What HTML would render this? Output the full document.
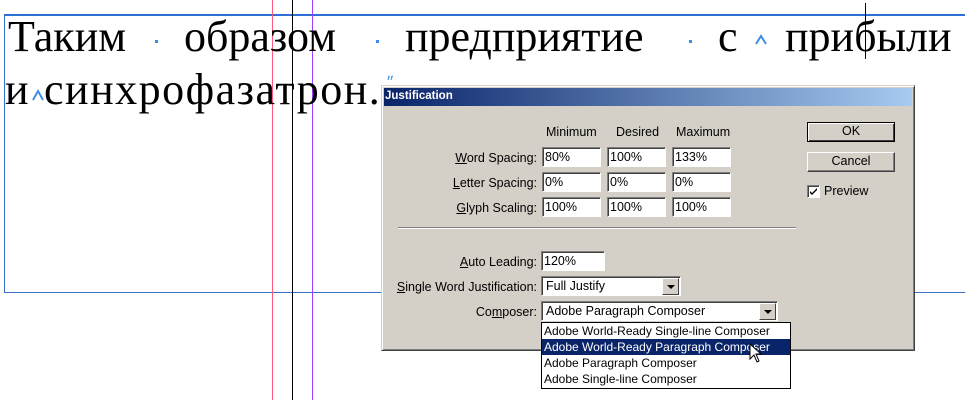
<!DOCTYPE html>
<html><head><meta charset="utf-8"><style>
*{margin:0;padding:0;box-sizing:border-box}
body{width:965px;height:400px;background:#fff;position:relative;overflow:hidden;font-family:"Liberation Sans",sans-serif;font-size:12.5px;color:#000}
.a{position:absolute}
.serif{font-family:"Liberation Serif","DejaVu Serif",serif;font-size:44px;white-space:nowrap;line-height:1}
.dot{position:absolute;width:3px;height:3px;background:#3a8ee6}
.lbl{position:absolute;text-align:right;white-space:nowrap}
.in{position:absolute;background:#fff;border-top:1px solid #808080;border-left:1px solid #808080;border-right:1px solid #fff;border-bottom:1px solid #fff;box-shadow:inset 1px 1px 0 #404040;padding:2px 0 0 2px;height:20px;white-space:nowrap}
.btn{position:absolute;width:88px;height:20px;background:#d4d0c8;border:1px solid;border-color:#fff #404040 #404040 #fff;box-shadow:inset -1px -1px 0 #808080;text-align:center;line-height:17px}
.arr{position:absolute;right:1px;top:1px;width:17px;height:17px;background:#d4d0c8;border:1px solid;border-color:#fff #404040 #404040 #fff}
.arr:after{content:"";position:absolute;left:4px;top:6px;border:4px solid transparent;border-top:4px solid #000}
u{text-decoration:underline}
</style></head><body>
<div class="a" style="left:4px;top:14px;width:961px;height:2px;background:#2c6fd6"></div>
<div class="a" style="left:4px;top:14px;width:1px;height:279px;background:#3a6fc8"></div>
<div class="a" style="left:4px;top:292px;width:961px;height:1px;background:#3a6fc8"></div>
<div class="a" style="left:272px;top:0;width:1px;height:400px;background:#ff5a7a"></div>
<div class="a" style="left:292px;top:0;width:1px;height:400px;background:#000"></div>
<div class="a" style="left:312px;top:0;width:1px;height:400px;background:#a040ff"></div>
<div class="a" style="left:865px;top:3px;width:1px;height:56px;background:#000"></div>
<div class="a serif" style="left:8px;top:15px">Таким</div>
<div class="a serif" style="left:184px;top:15px">образом</div>
<div class="a serif" style="left:405px;top:15px">предприятие</div>
<div class="a serif" style="left:718px;top:15px">с</div>
<div class="a serif" style="left:785px;top:15px">прибыли</div>
<div class="dot" style="left:155px;top:40px"></div>
<div class="dot" style="left:376px;top:40px"></div>
<div class="dot" style="left:689px;top:40px"></div>
<svg class="a" style="left:754px;top:34px" width="14" height="12"><path d="M2 10 L7 2 L12 10" fill="none" stroke="#3a8ee6" stroke-width="2"/></svg>
<div class="a serif" style="left:5px;top:68px">и</div>
<svg class="a" style="left:31px;top:88px" width="14" height="14"><path d="M2 12 L7 3 L12 12" fill="none" stroke="#3a8ee6" stroke-width="2"/></svg>
<div class="a serif" style="left:44px;top:68px;letter-spacing:1.5px">синхрофазатрон.</div>
<div class="a" style="left:386px;top:74px;color:#3a8ee6;font-size:14px">״</div>
<div class="a" style="left:381px;top:85px;width:534px;height:266px;background:#d4d0c8;border:1px solid;border-color:#d4d0c8 #404040 #404040 #d4d0c8;box-shadow:inset 1px 1px 0 #fff,inset -1px -1px 0 #808080"></div>
<div class="a" style="left:384px;top:88px;width:528px;height:18px;background:linear-gradient(90deg,#0a246a,#a6caf0);color:#fff;font-weight:bold;font-size:11.5px;padding:2px 0 0 1px">Justification</div>
<div class="lbl" style="left:546px;top:125px">Minimum</div>
<div class="lbl" style="left:616px;top:125px">Desired</div>
<div class="lbl" style="left:676px;top:125px">Maximum</div>
<div class="lbl" style="right:428px;top:151px"><u>W</u>ord Spacing:</div>
<div class="lbl" style="right:428px;top:176px"><u>L</u>etter Spacing:</div>
<div class="lbl" style="right:428px;top:201px"><u>G</u>lyph Scaling:</div>
<div class="in" style="left:542px;top:147px;width:59px">80%</div>
<div class="in" style="left:607px;top:147px;width:59px">100%</div>
<div class="in" style="left:672px;top:147px;width:59px">133%</div>
<div class="in" style="left:542px;top:172px;width:59px">0%</div>
<div class="in" style="left:607px;top:172px;width:59px">0%</div>
<div class="in" style="left:672px;top:172px;width:59px">0%</div>
<div class="in" style="left:542px;top:197px;width:59px">100%</div>
<div class="in" style="left:607px;top:197px;width:59px">100%</div>
<div class="in" style="left:672px;top:197px;width:59px">100%</div>
<div class="a" style="left:398px;top:227px;width:398px;height:2px;border-top:1px solid #808080;border-bottom:1px solid #fff"></div>
<div class="lbl" style="right:428px;top:255px"><u>A</u>uto Leading:</div>
<div class="in" style="left:541px;top:251px;width:64px">120%</div>
<div class="lbl" style="right:428px;top:280px"><u>S</u>ingle Word Justification:</div>
<div class="in" style="left:541px;top:276px;width:140px;padding-left:4px">Full Justify<div class="arr"></div></div>
<div class="lbl" style="right:428px;top:305px">Co<u>m</u>poser:</div>
<div class="in" style="left:541px;top:301px;width:237px;padding-left:4px">Adobe Paragraph Composer<div class="arr"></div></div>
<div class="a" style="left:541px;top:322px;width:250px;height:67px;background:#fff;border:1px solid #000;line-height:16px;font-size:12px">
<div style="padding-left:2px">Adobe World-Ready Single-line Composer</div>
<div style="padding-left:2px;background:#0a246a;color:#fff">Adobe World-Ready Paragraph Composer</div>
<div style="padding-left:2px">Adobe Paragraph Composer</div>
<div style="padding-left:2px">Adobe Single-line Composer</div>
</div>
<svg class="a" style="left:749px;top:343px" width="14" height="22" viewBox="0 0 14 22"><path d="M1 1 L1 16 L5 12 L8 19 L10 18 L7 11 L12 11 Z" fill="#fff" stroke="#000" stroke-width="1"/></svg>
<div class="btn" style="left:807px;top:122px;border-color:#000;box-shadow:inset 1px 1px 0 #fff,inset -1px -1px 0 #404040">OK</div>
<div class="btn" style="left:807px;top:152px">Cancel</div>
<div class="a" style="left:807px;top:185px;width:13px;height:13px;background:#fff;border:1px solid;border-color:#808080 #fff #fff #808080;box-shadow:inset 1px 1px 0 #404040"><svg width="11" height="11" style="position:absolute;left:0;top:0"><path d="M2 5 L4 7 L9 2 L9 4 L4 9 L2 7 Z" fill="#000"/></svg></div>
<div class="a" style="left:824px;top:184px">Preview</div>
</body></html>
